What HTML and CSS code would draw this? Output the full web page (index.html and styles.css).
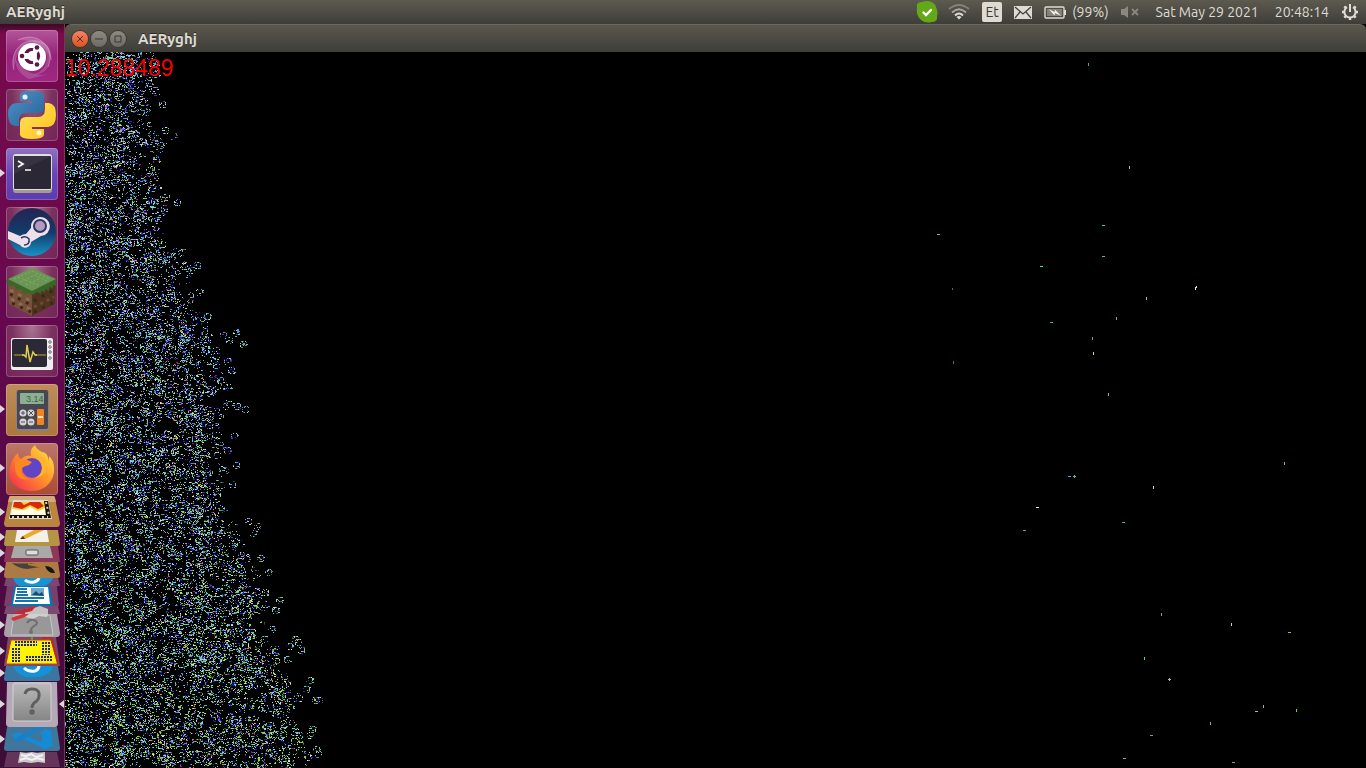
FILE: index.html
```html
<!DOCTYPE html>
<html lang="en">
<head>
    <meta charset="UTF-8">
    <meta name="viewport" content="width=device-width, initial-scale=1.0">
    <title>AERyghj</title>
    <link rel="stylesheet" href="styles.css">
</head>
<body>
    <!-- Top panel -->
    <header class="panel">
        <span class="app-name">AERyghj</span>
        <div class="indicators">
            <button class="indicator skype" aria-label="Skype">
                <svg width="22" height="22" viewBox="0 0 22 22"><path d="M1 6Q0 1 6 1Q8 0 12 0Q20 1 21 9Q22 12 21 15Q22 21 16 21Q9 23 4 18Q0 14 1 6Z" fill="#64a818"/><path d="M7.500 11.500l2.500 2.500 5-5" fill="none" stroke="#fff" stroke-width="2.400" stroke-linecap="round"/></svg>
            </button>
            <button class="indicator wifi" aria-label="Network">
                <svg width="22" height="18" viewBox="0 0 22 18" fill="none" stroke-width="1.800"><path d="M1 6Q11-2 21 6" stroke="#85827a"/><path d="M4 9.500Q11 3 18 9.500" stroke="#aaa79f"/><path d="M7 12.500Q11 8.500 15 12.500" stroke="#dfdbd2"/><path d="M8.500 14Q11 12 13.500 14L11 16.500Z" fill="#dfdbd2"/></svg>
            </button>
            <button class="indicator keyboard">Et</button>
            <button class="indicator mail" aria-label="Messages">
                <svg width="18" height="13" viewBox="0 0 18 13"><path d="M0 0h18v13H0z" fill="#dfdbd2"/><path d="M1 1l8 7 8-7M1 12l5-6M17 12l-5-6" fill="none" stroke="#45433e" stroke-width="1.300"/></svg>
            </button>
            <button class="indicator battery">
                <svg width="23" height="13" viewBox="0 0 23 13"><rect x="1" y="1" width="19" height="11" rx="1" fill="none" stroke="#dfdbd2" stroke-width="1.400"/><path d="M3 3h15v7H3z" fill="#85827a"/><path d="M21 4v5" stroke="#dfdbd2" stroke-width="2"/><path d="M4.500 3l6 3 .5-2.500 6 6.500-6-3-.5 2.500z" fill="#f1eee7"/></svg>
                <span>(99%)</span>
            </button>
            <button class="indicator sound" aria-label="Muted">
                <svg width="18" height="12" viewBox="0 0 18 12"><path d="M0 3h3l4-3v12L3 9H0z" fill="#8b8880"/><path d="M11 3l6 6M17 3l-6 6" stroke="#8b8880" stroke-width="1.800"/></svg>
            </button>
            <button class="indicator clock"><span>Sat May 29 2021</span><span>20:48:14</span></button>
            <button class="indicator session" aria-label="Session">
                <svg width="18" height="18" viewBox="0 0 18 18" fill="none" stroke="#dfdbd2"><path d="M6 4.200A5.600 5.600 0 1 0 12 4.200" stroke-width="2"/><path d="M9 1v8" stroke-width="2"/><path d="M1 9h2M15 9h2M9 15v2M3.300 3.300l1.500 1.500M14.700 3.300l-1.500 1.500M3.300 14.700l1.500-1.500M14.700 14.700l-1.500-1.500" stroke-width="2.400"/></svg>
            </button>
        </div>
    </header>

    <div class="desktop">
        <!-- Launcher -->
        <nav class="launcher">
            <button class="tile dash" aria-label="Dash">
                <svg viewBox="0 0 52 52"><g fill="#fff" fill-opacity=".16"><path d="M8 40C2 18 22 4 39 14q6 5 6 16Q40 14 26 13 10 16 8 40z"/><path d="M12 10C32 0 50 18 42 37q-5 8-16 8 15-4 15-18Q38 10 12 10z"/><path d="M10 24q-4 16 13 25l20-5Q24 48 13 34 9 30 10 24z"/></g><g fill="none" stroke="#f1cfe6" stroke-opacity=".4"><path d="M8 40C2 18 22 4 39 14q6 5 6 16"/><path d="M12 10C32 0 50 18 42 37"/></g><circle cx="26" cy="27" r="14" fill="#fff"/><circle cx="26" cy="26" r="6.500" fill="none" stroke="#5e1648" stroke-width="3.200"/><path d="M26 26L15 26M26 26l6-10M26 26l6 10" stroke="#fff" stroke-width="6"/><circle cx="26" cy="26" r="5" fill="#fff"/><path d="M20.500 29.500A6.500 6.500 0 0 0 27 32.400M32.400 27A6.500 6.500 0 0 0 32.400 25M20.500 22.500A6.500 6.500 0 0 1 27 19.600" fill="none" stroke="#5e1648" stroke-width="3.200"/><g fill="#5e1648"><circle cx="16" cy="26" r="2.300"/><circle cx="31" cy="17.500" r="2.300"/><circle cx="31" cy="34.500" r="2.300"/></g></svg>
            </button>
            <button class="tile plum" aria-label="Python">
                <svg viewBox="0 0 52 52"><defs><linearGradient id="snake-blue" x2="1" y2="1"><stop stop-color="#4b94cf"/><stop offset="1" stop-color="#2b5f91"/></linearGradient><linearGradient id="snake-yellow" x2="1" y2="1"><stop stop-color="#ffe15b"/><stop offset="1" stop-color="#ffc31d"/></linearGradient></defs><path d="M14 10V6q1-4 12-4t12 4v12q0 6-6 6H20q-7 0-7 8v5H9q-7-1-7-12 0-10 8-11h16v-2H14z" fill="url(#snake-blue)"/><path d="M38 42v4q-1 4-12 4t-12-4V34q0-6 6-6h12q7 0 7-8v-6h4q7 1 7 12 0 11-8 12H26v2h12z" fill="url(#snake-yellow)"/><circle cx="19" cy="8" r="2.500" fill="#e6f4ff"/><circle cx="33" cy="44" r="2.500" fill="#fff8ce"/></svg>
            </button>
            <button class="tile violet running" aria-label="Terminal">
                <svg viewBox="0 0 52 52"><rect x="7" y="8" width="39" height="37" rx="3" fill="#a19d96"/><rect x="7" y="6" width="39" height="36" rx="3" fill="#e2dfd9"/><rect x="8" y="8" width="37" height="33" rx="1" fill="#2c2735"/><path d="M8 8h37L8 26z" fill="#383341"/><path d="M12 13l5 3-5 3M19 22h6" fill="none" stroke="#fff" stroke-width="1.700"/></svg>
            </button>
            <button class="tile plum" aria-label="Steam">
                <svg viewBox="0 0 52 52"><defs><linearGradient id="steam" x2="0" y2="1"><stop stop-color="#252451"/><stop offset=".5" stop-color="#123b68"/><stop offset="1" stop-color="#1592c7"/></linearGradient></defs><circle cx="26" cy="25" r="24" fill="url(#steam)"/><path d="M2 24l12 5q3-2 6-2l5-6a9.500 9.500 0 1 1 10 8l-10 6a6 6 0 0 1-11 3L2 32z" fill="#eedfeb"/><circle cx="34" cy="19" r="6" fill="#b79abb" stroke="#263a65" stroke-width="2"/><path d="M15 31q5-3 8 1 1 6-5 6" fill="none" stroke="#263a65" stroke-width="1.500"/></svg>
            </button>
            <button class="tile plum" aria-label="Minecraft">
                <svg viewBox="0 0 52 52"><path d="M2 13l24 12v25L3 38z" fill="#765139"/><path d="M50 13L26 25v25l23-12z" fill="#513521"/><g fill="none" stroke="#93694a" stroke-width="3" stroke-dasharray="4 5"><path d="M4 24l21 11M5 33l20 11"/></g><g fill="none" stroke="#3a281d" stroke-width="3" stroke-dasharray="3 6"><path d="M4 28l21 11M6 37l19 9M28 35l20-11M28 46l20-10"/></g><path d="M28 41l20-10" stroke="#6e4a31" stroke-width="3" stroke-dasharray="3 4"/><path d="M2 13l24 12 24-12v7l-3-1v3l-4-1v4l-4-2v3l-4-1v3l-4-2-4 3-5-2-4 1-3-5-4 1-3-5-4 1-3-4-3 1z" fill="#376729"/><path d="M26 2l24 11-24 12L2 13z" fill="#699653"/><g fill="none" stroke="#86ac6d" stroke-dasharray="2 2"><path d="M8 13l18-8 18 8M14 16l15-7 14 7M20 19l13-6M12 11l20 8"/></g></svg>
            </button>
            <button class="tile plum" aria-label="System Monitor">
                <svg viewBox="0 0 52 52"><rect x="5" y="13" width="42" height="32" rx="2" fill="#f1eeee"/><rect x="6" y="14" width="35" height="28" rx="2" fill="#2c2937"/><path d="M8 30h10M29 30h11" stroke="#8f7e34" stroke-width="1.500"/><path d="M16 30h2l2 2 1-12 3 17 3-10 2 3h2" fill="none" stroke="#dfce4b" stroke-width="1.500"/><g fill="#ddd" stroke="#777"><circle cx="44" cy="17" r="1.300"/><circle cx="44" cy="22" r="1.300"/><circle cx="44" cy="27" r="1.300"/><circle cx="44" cy="33" r="1.300"/></g></svg>
            </button>
            <button class="tile tan running" aria-label="Calculator">
                <svg viewBox="0 0 52 52"><rect x="10" y="6" width="33" height="41" rx="3" fill="#85818a"/><rect x="11" y="6" width="31" height="39" rx="2" fill="#494551"/><rect x="14" y="9" width="24" height="11" rx="1" fill="#8bb091"/><text x="20" y="18" class="calc-text">3.14</text><g fill="#d5d3d5"><circle cx="17" cy="29" r="3.500"/><circle cx="25" cy="29" r="3.500"/><circle cx="17" cy="38" r="3.500"/><circle cx="25" cy="38" r="3.500"/></g><path d="M15 29h4M17 27v4M23 27l4 4M27 27l-4 4M15 38h4M23 38h4" stroke="#55515b"/><rect x="31" y="25" width="7" height="16" rx="1" fill="#f58221"/><path d="M32 33h5" stroke="#ffe2be" stroke-width="2"/></svg>
            </button>
            <button class="tile rust running" aria-label="Firefox">
                <svg viewBox="0 0 52 52"><defs><linearGradient id="fox" x1="1" x2="0" y2="1"><stop stop-color="#fff04b"/><stop offset=".45" stop-color="#ff9827"/><stop offset="1" stop-color="#f52155"/></linearGradient></defs><path d="M29 2q-6 5-4 11-5-2-10 3-3-1-3-6-6 5-8 14c-4 15 8 24 22 24s23-11 22-23q0-7-5-12v6Q42 9 36 9q-6-3-7-7z" fill="url(#fox)"/><circle cx="26" cy="25" r="10" fill="#6244c7"/><path d="M9 18q9-4 17 1-2 3-6 4-5 1-5 6 2 6 9 7-14 3-15-12z" fill="#ff8722"/><path d="M29 14q7 2 7 11 0 7-7 10 12-2 12-13 0-10-12-8z" fill="#ffb22c"/></svg>
            </button>

            <!-- Folded part of the launcher -->
            <button class="fold fold-film running" aria-label="Video editor">
                <svg viewBox="0 0 64 35"><path d="M11 1h42q2 0 2 2l5 25q0 4-3 4H7q-3 0-3-4L9 3q0-2 2-2z" fill="#b9853f"/><path d="M11 1h42q2 0 2 2l1 4H8l1-4q0-2 2-2z" fill="#d1aa78"/><path d="M13 5h35l4 19H9z" fill="#dedbd1"/><path d="M14 7h33l3 15H11z" fill="#ffd329"/><path d="M14 7h7l3 3 6-3h10l4 4-6 3-8-4-8 4-9-2z" fill="#d9290d"/><path d="M12 14l12 1 6-3 8 4 7-3 1 8H11z" fill="#fffbe8"/><path d="M44 6h4l3 17H10v-3h36z" fill="#17120d"/><path d="M12 22h36M46 7l3 13" fill="none" stroke="#ded2bd" stroke-width="2" stroke-dasharray="2 3"/></svg>
            </button>
            <button class="fold fold-slim running" aria-label="Text editor">
                <svg viewBox="0 0 64 16"><path d="M6 0h52l2 14q0 2-2 2H6q-2 0-2-2z" fill="#b49545"/><path d="M17 0h30l2 12H15z" fill="#f4f1e8"/><path d="M21 7L34 0h10L25 9z" fill="#edaa25"/><path d="M20 9l3-3 2 3z" fill="#493921"/></svg>
            </button>
            <button class="fold fold-slim running" aria-label="Files">
                <svg viewBox="0 0 64 16"><path d="M6 0h52l2 16H4z" fill="#8e3756"/><path d="M14 0h36l3 12H11z" fill="#aaa9a8"/><rect x="26" y="4" width="12" height="5" rx="1" fill="#ddd" stroke="#555"/></svg>
            </button>
            <button class="fold fold-slim running" aria-label="Image editor">
                <svg viewBox="0 0 64 16"><path d="M6 0h52l2 13q0 3-2 3H6q-2 0-2-3z" fill="#ac7a43"/><path d="M12 1q10 1 19 0l9 4-13 2q-10-1-15-6z" fill="#46413c"/><path d="M28 2l20 4" stroke="#b27a39" stroke-width="2"/><path d="M45 4q8 0 10 7-7 1-10-7z" fill="#151515"/></svg>
            </button>
            <button class="fold fold-thin" aria-label="Skype">
                <svg viewBox="0 0 64 8"><path d="M6 0h52l2 8H4z" fill="#7c4673"/><path d="M13 0h40q-1 4-8 8H20q-6-3-7-8z" fill="#1593d3"/><path d="M25 2q3 3 9 2 4-1 5-4" fill="none" stroke="#fff" stroke-width="3"/></svg>
            </button>
            <button class="fold fold-doc" aria-label="Writer">
                <svg viewBox="0 0 64 20"><path d="M7 0h50l2 20H4z" fill="#783f6d"/><path d="M14 0h36l3 20H11z" fill="#0971b4"/><path d="M16 1h32l2 17H13z" fill="#fff"/><path d="M17 3h10M17 6h10M16 9h12M16 12h28M15 15h23" stroke="#1674af" stroke-width="2"/><path d="M31 2h13v8H31z" fill="#6ca9cf"/><path d="M32 9l4-4 3 3 3-2 2 4z" fill="#174d71"/></svg>
            </button>
            <button class="fold fold-thin" aria-label="Settings">
                <svg viewBox="0 0 64 8"><path d="M6 0h52l2 8H4z" fill="#774c70"/><path d="M25 3l9-1 6-2 8 3v5H25z" fill="#c6c2c3"/><path d="M11 8l17-6 8-2-4 5-13 3z" fill="#c5282c"/></svg>
            </button>
            <button class="fold fold-unknown running" aria-label="Unknown application">
                <svg viewBox="0 0 64 23"><path d="M7 0h50l3 19q0 4-3 4H7q-3 0-3-4z" fill="#aaa0aa"/><path d="M14 1h36l3 20H11z" fill="#989898" stroke="#c7c6c5"/><path d="M25 0h23l-1 3-8-1-6 3-8-2z" fill="#d2cfd0"/><path d="M11 4l12-4h6l-4 3-12 4z" fill="#d33335"/><path d="M27 9q2-4 7-3 6 3 0 6-3 2-3 4" fill="none" stroke="#6f6f6f" stroke-width="2"/><circle cx="31" cy="18" r="2" fill="#6f6f6f"/></svg>
            </button>
            <button class="fold fold-board running" aria-label="Board">
                <svg viewBox="0 0 64 29"><path d="M8 0h48l4 29H4z" fill="#7e4869"/><path d="M11 3h40l7 24H6z" fill="#fff400" stroke="#d33a18"/><path d="M42 1l9-1 7 27" fill="none" stroke="#c12427" stroke-width="2"/><path d="M32 0v3" stroke="#57a827" stroke-width="2"/><g stroke="#1e247c" stroke-width="2" stroke-dasharray="2 1" fill="none"><path d="M15 5h22M15 8h22M13 11v14M16 11v14M19 11v14M43 5v13M46 5v13M49 5v13M26 20h27M26 23h27"/></g></svg>
            </button>
            <button class="fold fold-slim running" aria-label="Skype">
                <svg viewBox="0 0 64 16"><path d="M6 0h52l2 13q0 2-2 2H6q-2 0-2-2z" fill="#39779e"/><path d="M13 0h40q-1 8-14 11H26Q16 8 13 0z" fill="#1592d7"/><path d="M24 2q4 4 11 3 4-1 4-6" fill="none" stroke="#fff" stroke-width="3"/></svg>
            </button>
            <button class="fold fold-current running active" aria-label="AERyghj">
                <svg viewBox="0 0 64 45"><path d="M7 0h50l1 41q0 4-3 4H9q-3 0-3-4z" fill="#b5a8b7"/><defs><linearGradient id="unknown" x2="0" y2="1"><stop stop-color="#bbb"/><stop offset="1" stop-color="#858585"/></linearGradient></defs><rect x="13" y="1" width="38" height="38" rx="2" fill="url(#unknown)" stroke="#d4d2d2"/><path d="M25 12q1-5 7-5 8 0 7 7 0 4-5 7-2 2-2 5" fill="none" stroke="#5f5f5f" stroke-width="3"/><circle cx="32" cy="30" r="2.800" fill="#616161"/></svg>
            </button>
            <button class="fold fold-code running" aria-label="Code">
                <svg viewBox="0 0 64 25"><path d="M7 0h50l3 21q0 3-3 3H7q-3 0-3-3z" fill="#42759a"/><path d="M12 8l6-3 24 11V7l-4 1 7-6 6 1 2 16-8 3-24-11-4 3z" fill="#168bd5"/><path d="M45 0L19 15l-7-2L36 0z" fill="#1b7fc6"/></svg>
            </button>
            <button class="fold fold-slim" aria-label="Trash">
                <svg viewBox="0 0 64 16"><path d="M7 0h50l3 15H4z" fill="#64345b"/><path d="M20 0l6 1 6-1 5 1 8-1v11l-7-1-7 1-7-1-6 1z" fill="#c9c8c8"/><path d="M21 3l5 1 5-2 5 3 7-2M20 8l6-2 6 2 5-2 7 2" fill="none" stroke="#f2f2f2" stroke-width="2"/></svg>
            </button>
        </nav>

        <!-- Application window -->
        <main class="window">
            <div class="titlebar">
                <button class="control close" aria-label="Close"><svg viewBox="0 0 16 16"><path d="M5 5l6 6M11 5l-6 6"/></svg></button>
                <button class="control" aria-label="Minimize"><svg viewBox="0 0 16 16"><path d="M4 8h8"/></svg></button>
                <button class="control" aria-label="Maximize"><svg viewBox="0 0 16 16"><path d="M5 5h6v6H5z"/></svg></button>
                <h1>AERyghj</h1>
            </div>
            <div class="view">
                <canvas id="world"></canvas>
                <output class="counter">10.288489</output>
            </div>
        </main>
    </div>
    <script src="script.js"></script>
</body>
</html>
```

FILE: styles.css
```css
* {
    box-sizing: border-box;
}

body {
    margin: 0;
    height: 100vh;
    display: flex;
    flex-direction: column;
    overflow: hidden;
    background: #000;
    color: #dfdbd2;
    font-family: Ubuntu, "Noto Sans", sans-serif;
    font-size: 14px;
}

button {
    padding: 0;
    border: none;
    background: none;
    color: inherit;
    font: inherit;
}

svg {
    display: block;
}

/* Top panel */
.panel {
    flex: none;
    height: 24px;
    display: flex;
    align-items: center;
    justify-content: space-between;
    padding: 0 7px 0 6px;
    background: linear-gradient(#5d5a50, #3e3d38);
}

.app-name,
.titlebar h1 {
    margin: 0;
    font-size: 15px;
    font-weight: bold;
    line-height: 20px;
    text-shadow: 0 -1px #2c2b27;
}

.indicators {
    display: flex;
    align-items: center;
    gap: 12px;
}

.indicator {
    display: flex;
    align-items: center;
    line-height: 20px;
}

.skype {
    margin-right: -2px;
}

.keyboard {
    width: 20px;
    justify-content: center;
    border-radius: 2px;
    background: #dfdbd2;
    color: #3c3b37;
}

.battery {
    gap: 5px;
}

.clock {
    gap: 16px;
    margin-left: 5px;
}

.desktop {
    flex: 1;
    min-height: 0;
    display: flex;
}

/* Launcher */
.launcher {
    flex: none;
    width: 65px;
    display: flex;
    flex-direction: column;
    align-items: center;
    padding-top: 6px;
    padding-right: 1px;
    border-right: 1px solid #7d345a;
    background: linear-gradient(#3f0828, #780b4b 10px, #65084f 40%, #3b0d37);
    overflow: hidden;
}

.tile,
.fold {
    position: relative;
    flex: none;
}

.tile {
    width: 52px;
    height: 52px;
    margin-bottom: 7px;
    border-radius: 4px;
    box-shadow: inset 0 0 0 1px rgba(255, 255, 255, 0.2);
}

.tile svg {
    width: 52px;
    height: 52px;
}

.dash {
    background: linear-gradient(#b35699, #94217a 50%, #a02a83);
}

.plum {
    background: radial-gradient(ellipse at top, #aa7793, #7b315f 55%, #732457);
}

.violet {
    background: linear-gradient(#8c73c2, #6944b5 50%, #5e3cae);
}

.tan {
    background: linear-gradient(#bd8d59, #ad763b);
}

.rust {
    background: linear-gradient(#bd766a, #a94c35);
}

.calc-text {
    fill: #435d47;
    font-family: "Liberation Sans", sans-serif;
    font-size: 9px;
}

.fold {
    width: 64px;
    height: 16px;
}

.fold svg {
    width: 64px;
    height: 100%;
}

.fold-film {
    height: 35px;
    margin-top: -7px;
}

.fold-thin {
    height: 8px;
}

.fold-doc {
    height: 20px;
}

.fold-unknown {
    height: 23px;
}

.fold-board {
    height: 29px;
}

.fold-current {
    height: 45px;
}

.fold-code {
    height: 25px;
}

/* Arrows next to the running applications */
.running::before,
.active::after {
    content: '';
    position: absolute;
    top: 50%;
    left: 0;
    margin-top: -5px;
    border: 4px solid transparent;
    border-left: 5px solid #dcd8dc;
    border-right: 0;
}

.tile.running::before {
    left: -6px;
}

.active::after {
    left: auto;
    right: 0;
    border-left: 0;
    border-right: 5px solid #dcd8dc;
}

/* Application window */
.window {
    flex: 1;
    min-width: 0;
    display: flex;
    flex-direction: column;
}

.titlebar {
    flex: none;
    height: 28px;
    display: flex;
    align-items: center;
    gap: 3px;
    padding: 0 7px;
    border-top: 1px solid #6a675d;
    border-radius: 6px 6px 0 0;
    background: linear-gradient(#5a574e, #3e3d38);
}

.titlebar h1 {
    margin-left: 9px;
}

.control {
    width: 16px;
    height: 16px;
    border-radius: 50%;
    background: linear-gradient(#8e8b82, #6b6962);
    box-shadow: 0 0 0 1px #3a3935;
}

.control path {
    fill: none;
    stroke: #3c3b37;
}

.close {
    background: linear-gradient(#f58460, #e3501f);
}

.view {
    flex: 1;
    min-height: 0;
    position: relative;
    background: #000;
}

#world {
    display: block;
    width: 100%;
    height: 100%;
}

/* Elapsed time over the canvas */
.counter {
    position: absolute;
    top: 2px;
    left: 0;
    color: #f00;
    font-family: "Liberation Sans", Arial, sans-serif;
    font-size: 23px;
    line-height: 28px;
}
```

FILE: script.js
```js
const canvas = document.getElementById('world');
canvas.width = canvas.clientWidth;
canvas.height = canvas.clientHeight;
const ctx = canvas.getContext('2d');

let seed = 29052021;
function random() {
    seed = (seed * 1664525 + 1013904223) % 4294967296;
    return seed / 4294967296;
}

const colors = ['#69c4cc', '#69c4cc', '#69c4cc', '#5aa9a0', '#7fdcec', '#7fdcec', '#4a8a7c', '#33604f', '#1b1bea', '#1b1bea', '#4a9ae0', '#a855e0', '#8b1f92', '#d2912a', '#f6dc90', '#234a38'];

// Edge of the colony: [y, x]
const edge = [
    [0, 94], [40, 98], [64, 84], [88, 104], [104, 100], [122, 92], [150, 108],
    [175, 96], [190, 110], [213, 128], [255, 130], [267, 140], [280, 148],
    [295, 158], [325, 160], [353, 168], [380, 158], [428, 166], [450, 161],
    [470, 178], [490, 178], [512, 196], [550, 206], [570, 202], [590, 216],
    [610, 214], [640, 238], [670, 236], [700, 246], [716, 250]
];

function edgeAt(y) {
    for (let i = 1; i < edge.length; i++) {
        if (y <= edge[i][0]) {
            const [y0, x0] = edge[i - 1];
            const [y1, x1] = edge[i];
            return x0 + (x1 - x0) * (y - y0) / (y1 - y0);
        }
    }
    return edge[edge.length - 1][1];
}

function cell(x, y) {
    let color = colors[Math.floor(random() * colors.length)];
    // more green cells towards the bottom
    if (random() < 0.04 + Math.max(0, y - 380) / canvas.height * 0.32) color = '#7cec18';
    ctx.fillStyle = color;
    ctx.fillRect(x, y, random() < 0.2 ? 2 : 1, 1);
}

// Small broken ring of cells
function ring(cx, cy, r, density) {
    for (let dy = -r; dy <= r; dy++) {
        for (let dx = -r; dx <= r; dx++) {
            const outer = Math.max(Math.abs(dx), Math.abs(dy)) === r;
            const corner = Math.abs(dx) === r && Math.abs(dy) === r;
            if (outer && !corner && cx + dx >= 0 && random() < density) cell(cx + dx, cy + dy);
        }
    }
}

for (let i = 0; i < 12000; i++) {
    const cx = Math.floor(random() * 260);
    const cy = Math.floor(random() * canvas.height);
    const limit = edgeAt(cy);
    if (cx > limit - 3) continue;
    if (cx > limit - 22 && random() < 0.5) continue;
    ring(cx, cy, 1 + Math.floor(random() * 3), 0.37);
}

// Groups that have broken away from the edge: [x, y]
const groups = [
    [108, 84], [100, 78], [97, 52], [112, 150], [99, 156], [118, 200],
    [132, 213], [126, 218], [134, 240], [142, 264], [158, 283], [171, 281],
    [164, 288], [178, 292], [162, 309], [166, 318], [163, 335], [155, 328],
    [165, 352], [172, 354], [180, 357], [169, 384], [162, 398], [171, 413],
    [167, 432], [183, 469], [192, 474], [188, 481], [195, 506], [203, 520],
    [200, 540], [214, 548], [210, 558], [206, 577], [230, 587], [224, 594],
    [236, 598], [233, 590], [222, 607], [210, 600], [244, 628], [241, 637],
    [250, 648], [254, 648], [247, 677], [245, 683], [251, 697], [253, 702]
];
for (const [x, y] of groups) {
    ring(x, y, 3, 0.5);
    ring(x + 1, y - 1, 2, 0.45);
}

// Lone cells: [x, y, width, height, color]
const loners = [
    [172, 277, 2, 4, '#4a9ae0'], [178, 291, 2, 2, '#5aa9a0'],
    [1023, 11, 1, 3, '#4ba99a'], [1064, 114, 1, 3, '#b7bba8'],
    [1037, 173, 3, 1, '#55bca8'], [1037, 204, 3, 1, '#55bca8'],
    [872, 182, 3, 1, '#55bca8'], [975, 214, 3, 1, '#55dfcf'],
    [887, 236, 1, 2, '#397b68'], [1130, 235, 1, 3, '#b8f4d0'],
    [1131, 234, 1, 2, '#b8f4d0'],
    [1081, 245, 1, 3, '#86bdb1'], [985, 270, 3, 1, '#4fae9e'],
    [1051, 265, 1, 3, '#65b67a'], [1027, 285, 1, 3, '#4ba99a'],
    [1028, 300, 1, 3, '#e3d09b'], [888, 309, 1, 3, '#397b68'],
    [1043, 341, 1, 3, '#6fbdac'], [1219, 410, 1, 3, '#4ccbbb'],
    [1003, 424, 3, 1, '#4f9acf'], [1008, 424, 3, 1, '#62b7a8'],
    [1009, 423, 1, 3, '#62b7a8'],
    [1088, 434, 1, 3, '#d7d3ba'], [971, 455, 3, 1, '#d7f4e8'],
    [958, 478, 3, 1, '#4ba99a'], [1057, 470, 3, 1, '#4ba99a'],
    [1096, 561, 1, 3, '#9a94a0'], [1166, 571, 1, 3, '#d5d0ab'],
    [1223, 580, 3, 1, '#75dc16'], [1079, 605, 1, 3, '#75dc16'],
    [1103, 627, 3, 1, '#b8b5a7'], [1104, 626, 1, 3, '#b8b5a7'],
    [1190, 659, 3, 1, '#a8bb9d'], [1198, 653, 1, 3, '#b8a58c'],
    [1231, 657, 1, 3, '#75dc16'], [1145, 670, 1, 3, '#54c8b8'],
    [1085, 683, 3, 1, '#8b967d'], [1058, 706, 3, 1, '#63bd9c'],
    [1167, 710, 3, 1, '#9a94a0']
];
for (const [x, y, w, h, color] of loners) {
    ctx.fillStyle = color;
    ctx.fillRect(x, y, w, h);
}
```
